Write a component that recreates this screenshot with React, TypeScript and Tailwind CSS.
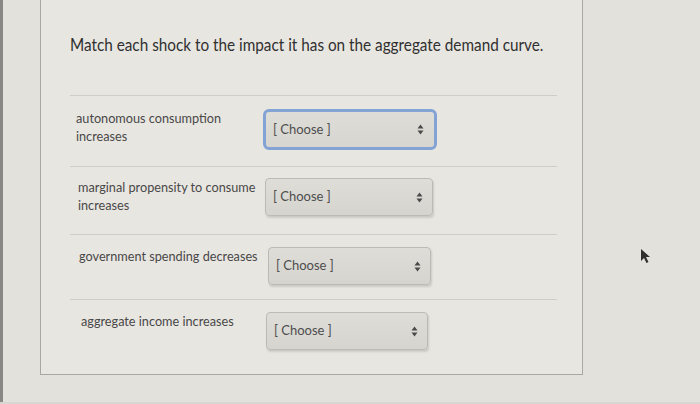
import React from "react";

type Row = { label: string[]; focused?: boolean; h: string; pad: string; col: string; sel: string };

const rows: Row[] = [
  { label: ["autonomous consumption", "increases"], focused: true, h: "h-[71px]", pad: "pt-[13px]", col: "pl-[6px] w-[193px]", sel: "w-[174px]" },
  { label: ["marginal propensity to consume", "increases"], h: "h-[68px]", pad: "pt-[11px]", col: "pl-[8px] w-[195px]", sel: "w-[168px]" },
  { label: ["government spending decreases"], h: "h-[65px]", pad: "pt-[12px]", col: "pl-[9px] w-[198px]", sel: "w-[163px]" },
  { label: ["aggregate income increases"], h: "h-[72px]", pad: "pt-[12px]", col: "pl-[11px] w-[196px]", sel: "w-[162px]" },
];

const Arrows = () => (
  <svg width="7" height="11" viewBox="0 0 7 11" className="shrink-0">
    <path d="M3.5 0.5 L6.5 4.5 L0.5 4.5 Z" fill="#4a4a4a" />
    <path d="M3.5 10.5 L6.5 6.5 L0.5 6.5 Z" fill="#4a4a4a" />
  </svg>
);

const ChooseSelect = ({ focused, width }: { focused?: boolean; width: string }) => (
  <div
    className={
      focused
        ? `${width} flex items-center justify-between h-[41px] rounded-[6px] border-[3px] border-[#82a3d4] bg-gradient-to-b from-[#dfddd8] to-[#d7d5d0] pl-[7px] pr-[10px]`
        : `${width} flex items-center justify-between h-[38px] rounded-[4px] border border-[#bcbab5] bg-gradient-to-b from-[#dfddd8] to-[#d6d4cf] shadow-[1px_2px_2px_rgba(0,0,0,0.12)] pl-[7px] pr-[9px]`
    }
  >
    <span className="text-[13px] text-[#4d4d4d]">[ Choose ]</span>
    <Arrows />
  </div>
);

const App = () => {
  return (
    <div
      className="relative w-[700px] h-[404px] overflow-hidden bg-[#e3e1dc] flex"
      style={{ fontFamily: "Lato, 'Open Sans', sans-serif" }}
    >
      {/* screen bezel edge */}
      <div className="w-[3px] h-full bg-[#8a8884] shrink-0" />

      <div className="ml-[37px] w-[543px] h-[375px] border-l border-r border-b border-[#a9a7a2] bg-[#e8e6e1] pl-[29px] pr-[25px] flex flex-col">
        <h1 className="mt-[33px] whitespace-nowrap text-[17px] leading-[24px] text-[#303030] scale-x-90 origin-left">
          Match each shock to the impact it has on the aggregate demand curve.
        </h1>

        <div className="mt-[38px] flex flex-col">
          {rows.map((r, i) => (
            <div key={i} className={`${r.h} border-t border-[#cfcdc8] ${r.pad} flex items-start`}>
              <div className={`${r.col} shrink-0 text-[12.7px] leading-[18px] text-[#484848]`}>
                {r.label.map((l) => (
                  <div key={l}>{l}</div>
                ))}
              </div>
              <ChooseSelect focused={r.focused} width={r.sel} />
            </div>
          ))}
        </div>
      </div>

      {/* mouse pointer */}
      <svg className="absolute left-[640px] top-[248px]" width="12" height="16" viewBox="0 0 12 16">
        <path d="M1 1 L1 13 L4 10 L6.5 15 L8.5 14 L6 9 L10 9 Z" fill="#2e2e2e" />
      </svg>

      <div className="absolute left-0 bottom-0 w-full h-[2px] bg-[#d8d6d1]" />
    </div>
  );
};

export default App;
